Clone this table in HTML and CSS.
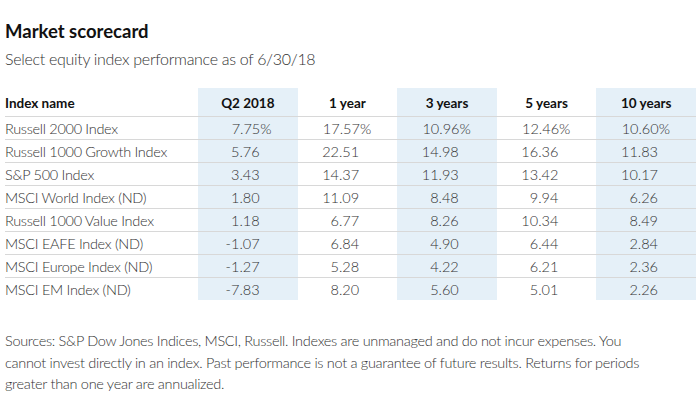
FILE: index.html
```html
<!DOCTYPE html>
<html>
<head>
<meta charset="utf-8">
<link rel="stylesheet" href="styles.css">
</head>
<body>
<div class="card">
  <h1 class="title">Market scorecard</h1>
  <p class="subtitle">Select equity index performance as of 6/30/18</p>
  <table class="score">
    <thead>
      <tr>
        <th class="name">Index name</th>
        <th class="shade">Q2 2018</th>
        <th>1 year</th>
        <th class="shade">3 years</th>
        <th>5 years</th>
        <th class="shade">10 years</th>
      </tr>
    </thead>
    <tbody>
      <tr><td class="name">Russell 2000 Index</td><td class="shade">7.75<span class="pct">%</span></td><td>17.57<span class="pct">%</span></td><td class="shade">10.96<span class="pct">%</span></td><td>12.46<span class="pct">%</span></td><td class="shade">10.60<span class="pct">%</span></td></tr>
      <tr><td class="name">Russell 1000 Growth Index</td><td class="shade">5.76</td><td>22.51</td><td class="shade">14.98</td><td>16.36</td><td class="shade">11.83</td></tr>
      <tr><td class="name">S&amp;P 500 Index</td><td class="shade">3.43</td><td>14.37</td><td class="shade">11.93</td><td>13.42</td><td class="shade">10.17</td></tr>
      <tr><td class="name">MSCI World Index (ND)</td><td class="shade">1.80</td><td>11.09</td><td class="shade">8.48</td><td>9.94</td><td class="shade">6.26</td></tr>
      <tr><td class="name">Russell 1000 Value Index</td><td class="shade">1.18</td><td>6.77</td><td class="shade">8.26</td><td>10.34</td><td class="shade">8.49</td></tr>
      <tr><td class="name">MSCI EAFE Index (ND)</td><td class="shade">-1.07</td><td>6.84</td><td class="shade">4.90</td><td>6.44</td><td class="shade">2.84</td></tr>
      <tr><td class="name">MSCI Europe Index (ND)</td><td class="shade">-1.27</td><td>5.28</td><td class="shade">4.22</td><td>6.21</td><td class="shade">2.36</td></tr>
      <tr><td class="name">MSCI EM Index (ND)</td><td class="shade">-7.83</td><td>8.20</td><td class="shade">5.60</td><td>5.01</td><td class="shade">2.26</td></tr>
    </tbody>
  </table>
  <p class="note">Sources: S&amp;P Dow Jones Indices, MSCI, Russell. Indexes are unmanaged and do not incur expenses. You cannot invest directly in an index. Past performance is not a guarantee of future results. Returns for periods greater than one year are annualized.</p>
</div>
</body>
</html>
```

FILE: styles.css
```css
html, body {
  margin: 0;
  padding: 0;
  background: #ffffff;
}

body {
  font-family: Lato, "Liberation Sans", sans-serif;
  color: #333333;
}

.card {
  padding: 19px 0 0 5px;
}

.title {
  margin: 0;
  font-size: 18.5px;
  line-height: 24px;
  font-weight: 700;
  color: #111111;
}

.subtitle {
  margin: 5px 0 0 0;
  font-size: 16px;
  line-height: 22px;
  font-weight: 300;
  letter-spacing: -0.3px;
  color: #333333;
}

.score {
  margin-top: 18px;
  width: 691px;
  border-collapse: collapse;
  table-layout: fixed;
}

.score th,
.score td {
  padding: 0;
  font-size: 14.5px;
}

.score th {
  height: 27px;
  padding-top: 1px;
  font-weight: 700;
  font-size: 13.5px;
  color: #111111;
  text-align: center;
  border-bottom: 1px solid #d8d8d8;
}

.score th.name {
  width: 193px;
  text-align: left;
}

.score td {
  height: 22px;
  font-weight: 300;
  color: #333333;
  text-align: right;
  padding-right: 38px;
  border-bottom: 1px solid #d8d8d8;
}

.score tbody tr:last-child td {
  border-bottom: none;
}

.score td.name {
  text-align: left;
  padding-right: 0;
  letter-spacing: -0.3px;
}

.score .shade {
  background: #e5f0f8;
}

.pct {
  margin-right: -12px;
}

.note {
  margin: 30px 0 0 0;
  font-size: 14.5px;
  line-height: 21.5px;
  font-weight: 300;
  letter-spacing: -0.3px;
  color: #333333;
  max-width: 652px;
}
```
